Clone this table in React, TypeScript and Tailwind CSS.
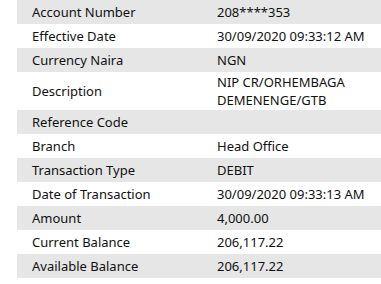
const rows: [string, string][] = [
  ["Account Number", "208****353"],
  ["Effective Date", "30/09/2020 09:33:12 AM"],
  ["Currency Naira", "NGN"],
  ["Description", "NIP CR/ORHEMBAGA\nDEMENENGE/GTB"],
  ["Reference Code", ""],
  ["Branch", "Head Office"],
  ["Transaction Type", "DEBIT"],
  ["Date of Transaction", "30/09/2020 09:33:13 AM"],
  ["Amount", "4,000.00"],
  ["Current Balance", "206,117.22"],
  ["Available Balance", "206,117.22"],
];

export default function App() {
  return (
    <div className="w-[381px] h-[284px] bg-white overflow-hidden pl-[17px] font-['Noto_Sans',sans-serif] text-[13px] text-[#111]">
      {rows.map(([label, value], i) => (
        <div
          key={label}
          className={`grid grid-cols-[200px_1fr] items-center leading-[18px] ${
            i % 2 === 0 ? "bg-[#e6e6e6]" : "bg-white"
          } ${value.includes("\n") ? "h-[38px]" : "h-[24px]"}`}
        >
          <span className="pl-[15px]">{label}</span>
          <span className="whitespace-pre-line">{value}</span>
        </div>
      ))}
    </div>
  );
}
